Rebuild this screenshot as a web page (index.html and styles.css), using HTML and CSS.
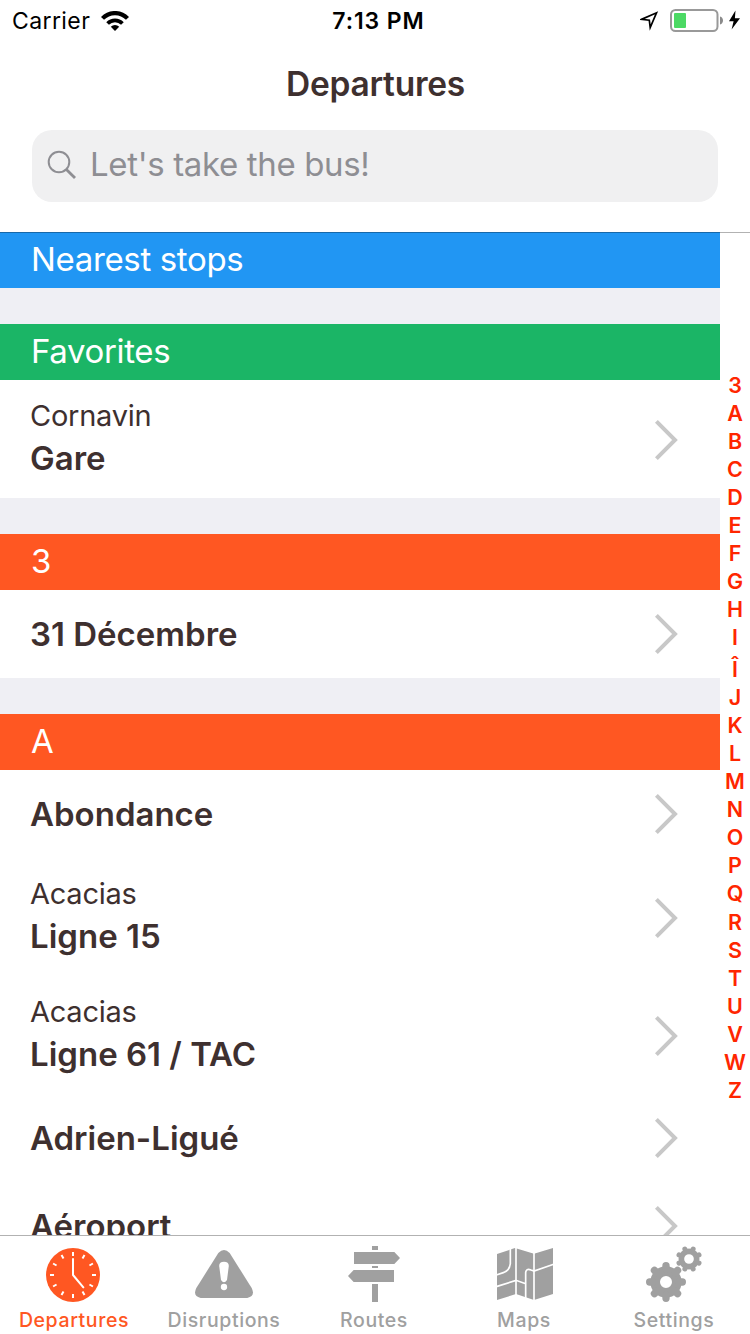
FILE: index.html
```html
<!DOCTYPE html>
<html lang="en">
<head>
<meta charset="utf-8">
<title>Departures</title>
<link rel="stylesheet" href="styles.css">
</head>
<body>
<svg class="defs" width="0" height="0">
  <symbol id="chevron" viewBox="0 0 24 42"><path d="M2.4 2.4 21 21 2.4 39.600" fill="none" stroke="#c8c8c8" stroke-width="4"/></symbol>
</svg>
<div class="app">
  <header class="top">
    <div class="status">
      <div class="status-left">
        <span class="carrier">Carrier</span>
        <svg class="wifi" width="28" height="20" viewBox="0 0 28 20">
          <path d="M1.500 7.400A17.300 17.300 0 0 1 26.500 7.400" fill="none" stroke="#000" stroke-width="4.200"/>
          <path d="M6.600 12.500A10.400 10.400 0 0 1 21.400 12.500" fill="none" stroke="#000" stroke-width="3.800"/>
          <path d="M14 19.900 9.800 15.700A6 6 0 0 1 18.200 15.700Z"/>
        </svg>
      </div>
      <div class="clock">7:13 PM</div>
      <div class="status-right">
        <svg width="110" height="40" viewBox="0 0 110 40">
          <path d="M1.500 19.400 16.500 12.800 10.200 27.500 9.300 20.200Z" fill="none" stroke="#000" stroke-width="1.700" stroke-miterlimit="6"/>
          <rect x="31" y="10" width="46.500" height="21" rx="4.500" fill="#fff" stroke="#999" stroke-width="2"/>
          <rect x="34" y="13" width="12" height="15" rx="1" fill="#4cd964"/>
          <path d="M80 16.500C84 17.500 84 23.500 80 24.500Z" fill="#8a8a8a"/>
          <path d="M95.500 10.500 89 21.200H93.600L91.600 29.500 100 18.200H94.900Z"/>
        </svg>
      </div>
    </div>
    <h1 class="title">Departures</h1>
    <div class="search">
      <svg width="30" height="30" viewBox="0 0 30 30" fill="none" stroke="#8e8e93">
        <circle cx="12" cy="12" r="10.300" stroke-width="2"/>
        <path d="M19.400 19.400 28 28" stroke-width="2.800"/>
      </svg>
      <span>Let's take the bus!</span>
    </div>
  </header>

  <main class="content">
    <div class="list">
      <h2 class="section blue">Nearest stops</h2>
      <div class="gap"></div>
      <h2 class="section green">Favorites</h2>
      <div class="row double"><div><p class="sub">Cornavin</p><p class="name">Gare</p></div><svg class="chev"><use href="#chevron"/></svg></div>
      <div class="gap"></div>
      <h2 class="section orange">3</h2>
      <div class="row"><p class="name">31 Décembre</p><svg class="chev"><use href="#chevron"/></svg></div>
      <div class="gap"></div>
      <h2 class="section orange">A</h2>
      <div class="row"><p class="name">Abondance</p><svg class="chev"><use href="#chevron"/></svg></div>
      <div class="row double"><div><p class="sub">Acacias</p><p class="name">Ligne 15</p></div><svg class="chev"><use href="#chevron"/></svg></div>
      <div class="row double"><div><p class="sub">Acacias</p><p class="name">Ligne 61 / TAC</p></div><svg class="chev"><use href="#chevron"/></svg></div>
      <div class="row"><p class="name">Adrien-Ligué</p><svg class="chev"><use href="#chevron"/></svg></div>
      <div class="row"><p class="name">Aéroport</p><svg class="chev"><use href="#chevron"/></svg></div>
    </div>
    <nav class="index">
      <span>3</span><span>A</span><span>B</span><span>C</span><span>D</span><span>E</span><span>F</span><span>G</span><span>H</span><span>I</span><span class="accented">Î</span><span>J</span><span>K</span><span>L</span><span>M</span><span>N</span><span>O</span><span>P</span><span class="tailed">Q</span><span>R</span><span>S</span><span>T</span><span>U</span><span>V</span><span>W</span><span>Z</span>
    </nav>
  </main>

  <nav class="tabs">
    <div class="tab active">
      <svg viewBox="0 0 180 180">
        <circle cx="84" cy="90" r="81" fill="currentColor"/>
        <g stroke="#fff" stroke-width="6">
          <path d="M84 21V33M84 147V159M15 90H27M141 90H153"/>
          <path d="M84 21V33M84 147V159M15 90H27M141 90H153" transform="rotate(30 84 90)"/>
          <path d="M84 21V33M84 147V159M15 90H27M141 90H153" transform="rotate(60 84 90)"/>
          <path d="M84 42V90L115 127" fill="none" stroke-linecap="round" stroke-linejoin="round"/>
        </g>
      </svg>
      <span>Departures</span>
    </div>
    <div class="tab">
      <svg viewBox="0 0 180 180">
        <path d="M70 24Q87 6 104 24L170 129Q182 153 157 159H17Q-8 153 4 129Z" fill="currentColor"/>
        <path d="M87 50C98 50 103 56 101 66L96 105Q87 119 78 105L73 66C71 56 76 50 87 50Z" fill="#fff"/>
        <circle cx="87" cy="126" r="9.500" fill="#fff"/>
      </svg>
      <span>Disruptions</span>
    </div>
    <div class="tab">
      <svg viewBox="0 0 180 180" fill="currentColor">
        <path d="M81 3H99V15H81ZM27 21H148L165 39 148 57H27ZM81 63H99V69H81ZM26 75H147V111H26L9 93ZM81 117H99V171H81Z"/>
      </svg>
      <span>Routes</span>
    </div>
    <div class="tab">
      <svg viewBox="0 0 180 180">
        <path d="M6 27 60 9 117 26 174 9V147L117 165 63 147 6 165Z" fill="currentColor"/>
        <g fill="none" stroke="#fff" stroke-width="5">
          <path d="M63 6V170M117 6V170"/>
          <path d="M46 9V56Q44 77 25 83L4 90"/>
          <path d="M4 125 63 106 92 116M92 159V83Q93 69 108 75L117 78 176 58"/>
        </g>
      </svg>
      <span>Maps</span>
    </div>
    <div class="tab">
      <svg viewBox="0 0 180 180" fill="none" stroke="currentColor">
        <circle cx="63" cy="111" r="32.500" stroke-width="29"/>
        <g stroke-width="22" stroke-linecap="round">
          <path d="M63 62V72M63 150V160M14 111H24M102 111H112"/>
          <path d="M63 62V72M63 150V160M14 111H24M102 111H112" transform="rotate(45 63 111)"/>
        </g>
        <circle cx="132" cy="42" r="23" stroke-width="17"/>
        <g stroke-width="15" stroke-linecap="round">
          <path d="M132 9.500V15M132 69V74.500M99.500 42H105M159 42H164.500" transform="rotate(22.500 132 42)"/>
          <path d="M132 9.500V15M132 69V74.500M99.500 42H105M159 42H164.500" transform="rotate(67.500 132 42)"/>
        </g>
      </svg>
      <span>Settings</span>
    </div>
  </nav>
</div>
</body>
</html>
```
FILE: styles.css
```css
* { box-sizing: border-box; margin: 0; padding: 0; }
body { font-family: Inter, "Liberation Sans", sans-serif; background: #fff; color: #3e302f; }
.defs { position: absolute; }
svg { display: block; flex: none; }
.app { width: 750px; height: 1334px; display: flex; flex-direction: column; overflow: hidden; }

.top { height: 232px; flex: none; background: #fff; position: relative; z-index: 1; box-shadow: 0 1px 0 rgba(0, 0, 0, .3); }
.status { display: grid; grid-template-columns: 1fr auto 1fr; height: 40px; line-height: 42px; color: #000; font-size: 23px; }
.status-left { display: flex; align-items: center; gap: 11px; padding-left: 12px; letter-spacing: .4px; }
.clock { font-weight: 600; letter-spacing: .9px; padding-left: 7px; }
.status-right { display: flex; justify-content: flex-end; }
.title { height: 90px; line-height: 89px; text-align: center; font-size: 33.500px; font-weight: 600; letter-spacing: -.25px; padding-left: 1px; }
.search { margin: 0 32px; height: 72px; border-radius: 20px; background: #f0f0f1; display: flex; align-items: center; gap: 13px; padding: 0 0 2px 15px; color: #8e8e93; font-size: 33px; letter-spacing: -.35px; }
.search span { padding-bottom: 2px; }

.content { flex: 1; min-height: 0; display: flex; overflow: hidden; }
.list { width: 720px; }
.section { height: 56px; line-height: 54px; padding-left: 31px; color: #fff; font-size: 33px; font-weight: 400; letter-spacing: -.35px; }
.blue { background: #2196f3; }
.green { background: #1bb566; }
.orange { background: #ff5722; }
.gap { height: 36px; background: #efeff4; }
.row { height: 88px; display: flex; align-items: center; justify-content: space-between; padding: 0 42px 0 30px; }
.double { height: 118px; padding-top: 2px; }
.double > div { padding-bottom: 4px; }
.name { font-size: 33px; font-weight: 600; line-height: 44px; }
.sub { font-size: 29px; line-height: 40px; letter-spacing: -.25px; }
.chev { width: 24px; height: 42px; }
.index { width: 30px; padding-top: 139px; display: flex; flex-direction: column; color: #ff2600; font-size: 21.500px; font-weight: 600; line-height: 28px; text-align: center; }
.index .accented { padding-top: 4px; }
.index .tailed { padding-bottom: 1px; }

.tabs { height: 98px; flex: none; background: #fff; box-shadow: 0 -1px 0 #b2b2b2; position: relative; z-index: 1; display: grid; grid-template-columns: repeat(5, 150px); }
.tab { display: flex; flex-direction: column; align-items: center; padding-top: 9px; color: #a0a0a0; font-size: 19.500px; font-weight: 500; line-height: 30px; letter-spacing: .6px; }
.tab svg { width: 60px; height: 60px; }
.tab span { padding-right: 2px; }
.active { color: #ff5722; }
```
